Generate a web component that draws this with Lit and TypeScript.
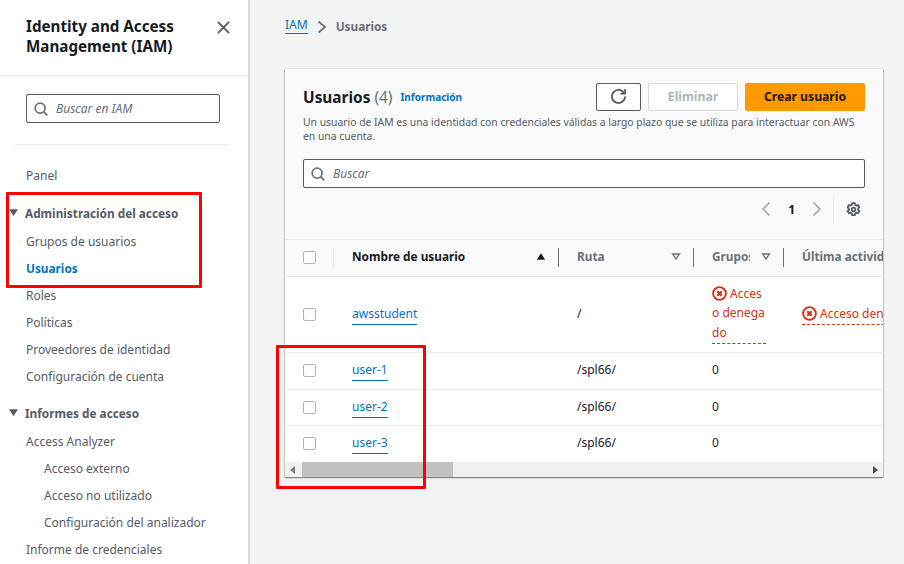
import { LitElement, css, html, svg } from 'lit'
import { customElement } from 'lit/decorators.js'

const searchIcon = html`<svg class="icon" viewBox="0 0 16 16" fill="none" stroke="currentColor" stroke-width="2">
  <circle cx="7" cy="7" r="5.6"></circle>
  <path d="M11 11l4.2 4.2"></path>
</svg>`

const errorIcon = html`<svg class="err-icon" viewBox="0 0 16 16" fill="none" stroke="#d13212" stroke-width="2">
  <circle cx="8" cy="8" r="6.8"></circle>
  <path d="M5.6 5.6l4.8 4.8M10.4 5.6l-4.8 4.8" stroke-width="2.3"></path>
</svg>`

const caret = svg`<path d="M1 1.5h10L6 9z"></path>`

const navGroups = [
  { title: 'Administración del acceso', items: [
    { label: 'Grupos de usuarios' },
    { label: 'Usuarios', active: true },
    { label: 'Roles' },
    { label: 'Políticas' },
    { label: 'Proveedores de identidad' },
    { label: 'Configuración de cuenta' },
  ] },
  { title: 'Informes de acceso', items: [
    { label: 'Access Analyzer' },
    { label: 'Acceso externo', sub: true },
    { label: 'Acceso no utilizado', sub: true },
    { label: 'Configuración del analizador', sub: true },
    { label: 'Informe de credenciales' },
  ] },
]

const users = [
  { name: 'user-1', path: '/spl66/' },
  { name: 'user-2', path: '/spl66/' },
  { name: 'user-3', path: '/spl66/' },
]

@customElement('app-root')
export class AppRoot extends LitElement {
  renderSidebar() {
    return html`
      <aside class="sidebar">
        <div class="side-head">
          <h2>Identity and Access Management (IAM)</h2>
          <svg class="close" viewBox="0 0 14 14" fill="none" stroke="#545b64" stroke-width="1.9">
            <path d="M1 1l12 12M13 1L1 13"></path>
          </svg>
        </div>
        <div class="side-search">
          <div class="input small">${searchIcon}<span>Buscar en IAM</span></div>
        </div>
        <hr class="side-rule" />
        <div class="nav-item panel">Panel</div>
        ${navGroups.map(group => html`
          <div class="nav-group">
            <div class="group-title">
              <svg class="group-caret" viewBox="0 0 12 10" fill="#545b64">${caret}</svg>
              ${group.title}
            </div>
            ${group.items.map(item => html`
              <div class="nav-item ${item.active ? 'active' : ''} ${item.sub ? 'sub' : ''}">${item.label}</div>
            `)}
          </div>
        `)}
      </aside>
    `
  }

  renderTable() {
    return html`
      <div class="table-wrap">
        <table>
          <colgroup>
            <col style="width: 49px" />
            <col style="width: 225px" />
            <col style="width: 135px" />
            <col style="width: 90px" />
            <col style="width: 200px" />
          </colgroup>
          <thead>
            <tr>
              <th class="check-cell"><span class="check"></span><i class="sep faint"></i></th>
              <th class="dark">
                <span class="th-text">Nombre de usuario</span>
                <svg class="sort" viewBox="0 0 12 10" fill="#16191f"><path d="M6 1l5 8H1z"></path></svg>
                <i class="sep"></i>
              </th>
              <th>
                <span class="th-text">Ruta</span>
                <svg class="sort" viewBox="0 0 12 10" fill="none" stroke="#687078" stroke-width="1.6"><path d="M2 2h8L6 8z"></path></svg>
                <i class="sep"></i>
              </th>
              <th>
                <span class="th-text">Grupos</span>
                <svg class="sort" viewBox="0 0 12 10" fill="none" stroke="#687078" stroke-width="1.6"><path d="M2 2h8L6 8z"></path></svg>
                <i class="sep"></i>
              </th>
              <th><span class="th-text nowrap">Última actividad</span></th>
            </tr>
          </thead>
          <tbody>
            <tr class="tall">
              <td class="check-cell"><span class="check"></span></td>
              <td><a class="link">awsstudent</a></td>
              <td>/</td>
              <td class="denied-cell"><span class="denied wrapped">${errorIcon}Acceso denegado</span></td>
              <td class="denied-cell"><span class="denied single">${errorIcon}Acceso denegado</span></td>
            </tr>
            ${users.map(user => html`
              <tr>
                <td class="check-cell"><span class="check"></span></td>
                <td><a class="link">${user.name}</a></td>
                <td>${user.path}</td>
                <td>0</td>
                <td></td>
              </tr>
            `)}
          </tbody>
        </table>
      </div>
      <div class="scrollbar">
        <svg class="arrow left" viewBox="0 0 6 8" fill="#7d7d7d"><path d="M5 0v8L0 4z"></path></svg>
        <div class="track"><div class="thumb"></div></div>
        <svg class="arrow" viewBox="0 0 6 8" fill="#4a4a4a"><path d="M1 0v8l5-4z"></path></svg>
      </div>
    `
  }

  render() {
    return html`
      <div class="page">
        ${this.renderSidebar()}
        <main class="main">
          <nav class="crumbs">
            <a class="crumb-link">IAM</a>
            <svg class="crumb-sep" viewBox="0 0 10 14" fill="none" stroke="#687078" stroke-width="1.8"><path d="M1.5 1.5 8 7l-6.5 5.5"></path></svg>
            <span class="crumb-current">Usuarios</span>
          </nav>
          <section class="card">
            <header class="card-head">
              <div class="title-row">
                <div class="title">
                  <h1>Usuarios <span class="count">(4)</span></h1>
                  <a class="info">Información</a>
                </div>
                <div class="actions">
                  <button class="btn refresh">
                    <svg viewBox="0 0 16 16" fill="none" stroke="#545b64" stroke-width="1.9">
                      <path d="M10 5h5V0"></path>
                      <path d="M15 8a7 7 0 1 1-1.1-3.8"></path>
                    </svg>
                  </button>
                  <button class="btn disabled">Eliminar</button>
                  <button class="btn primary">Crear usuario</button>
                </div>
              </div>
              <p class="desc">Un usuario de IAM es una identidad con credenciales válidas a largo plazo que se utiliza para interactuar con AWS en una cuenta.</p>
              <div class="input wide">${searchIcon}<span>Buscar</span></div>
              <div class="pager">
                <svg class="pg" viewBox="0 0 10 16" fill="none" stroke="#aab7b8" stroke-width="1.8"><path d="M8.5 1.5 2 8l6.5 6.5"></path></svg>
                <span class="pg-num">1</span>
                <svg class="pg" viewBox="0 0 10 16" fill="none" stroke="#aab7b8" stroke-width="1.8"><path d="M1.5 1.5 8 8l-6.5 6.5"></path></svg>
                <i class="pg-sep"></i>
                <svg class="gear" viewBox="0 0 16 16" fill="none" stroke="#545b64" stroke-width="1.9">
                  <path d="M6.6 1.2h2.8l.4 1.9 1.3.7 1.8-.6 1.4 2.4-1.4 1.3v1.4l1.4 1.3-1.4 2.4-1.8-.6-1.3.7-.4 1.9H6.6l-.4-1.9-1.3-.7-1.8.6-1.4-2.4 1.4-1.3V7.4L1.7 5.6l1.4-2.4 1.8.6 1.3-.7z"></path>
                  <circle cx="8" cy="8" r="2"></circle>
                </svg>
              </div>
            </header>
            ${this.renderTable()}
          </section>
        </main>
        <div class="mark mark-nav"></div>
        <div class="mark mark-users"></div>
      </div>
    `
  }

  static styles = css`
    :host {
      display: block;
      font-family: 'Noto Sans', 'Open Sans', sans-serif;
      font-size: 12px;
      color: #545b64;
    }
    * {
      box-sizing: border-box;
    }
    .page {
      display: flex;
      height: 564px;
      width: 904px;
      overflow: hidden;
      position: relative;
      background: #f2f3f3;
    }

    .sidebar {
      flex: 0 0 250px;
      height: 564px;
      background: #fff;
      border-right: 2px solid #d5dbdb;
      overflow: hidden;
    }
    .side-head {
      display: flex;
      justify-content: space-between;
      height: 76px;
      padding: 16px 18px 0 26px;
      border-bottom: 1px solid #eaeded;
    }
    .side-head h2 {
      margin: 0;
      width: 170px;
      font-size: 15.2px;
      line-height: 20px;
      font-weight: 700;
      color: #16191f;
    }
    .close {
      width: 13px;
      height: 13px;
      margin-top: 5px;
    }
    .side-search {
      padding: 18px 28px 0 26px;
    }
    .input {
      display: flex;
      align-items: center;
      gap: 8px;
      background: #fff;
      border: 1px solid #545b64;
      border-radius: 2px;
      padding-left: 7px;
      font-style: italic;
      color: #687078;
    }
    .input.small {
      height: 29px;
    }
    .input.wide {
      height: 29px;
      margin-top: 16px;
    }
    .icon {
      width: 14px;
      height: 14px;
      color: #687078;
    }
    .side-rule {
      margin: 21px 18px 17px 15px;
      border: 0;
      border-top: 1px solid #eaeded;
    }
    .nav-item {
      height: 27px;
      line-height: 27px;
      padding-left: 26px;
      white-space: nowrap;
    }
    .nav-item.panel {
      margin-bottom: 10px;
    }
    .nav-item.sub {
      padding-left: 44px;
    }
    .nav-item.active {
      color: #0073bb;
      font-size: 11.8px;
      font-weight: 700;
    }
    .nav-group {
      margin-bottom: 9px;
    }
    .group-title {
      display: flex;
      align-items: center;
      gap: 6px;
      height: 27px;
      margin-bottom: 2px;
      padding-left: 8px;
      font-size: 11.8px;
      font-weight: 700;
      white-space: nowrap;
    }
    .group-caret {
      width: 11px;
      height: 9px;
    }

    .main {
      flex: 1;
      min-width: 0;
      padding: 0 20px 0 35px;
    }
    .crumbs {
      display: flex;
      align-items: center;
      height: 69px;
      padding-bottom: 18px;
    }
    .crumb-link {
      color: #0073bb;
      border-bottom: 1px solid #0073bb;
      line-height: 16px;
    }
    .crumb-sep {
      width: 10px;
      height: 14px;
      margin: 2px 9px 0 9px;
    }
    .crumb-current {
      font-size: 11.8px;
      font-weight: 700;
      color: #687078;
    }

    .card {
      background: #fff;
      box-shadow: 0 1px 1px 0 rgba(0, 28, 36, 0.3), 1px 1px 1px 0 rgba(0, 28, 36, 0.15), -1px 1px 1px 0 rgba(0, 28, 36, 0.15), 0 -1px 0 0 rgba(0, 28, 36, 0.05);
      height: 408px;
      width: 598px;
      overflow: hidden;
    }
    .card-head {
      background: #fafafa;
      height: 171px;
      padding: 14px 18px 0 18px;
      border-bottom: 1px solid #eaeded;
    }
    .title-row {
      display: flex;
      justify-content: space-between;
      height: 28px;
    }
    .title {
      display: flex;
      align-items: center;
      gap: 8px;
    }
    h1 {
      margin: 0;
      font-size: 15.4px;
      font-weight: 700;
      color: #16191f;
    }
    .count {
      font-weight: 400;
      color: #687078;
    }
    .info {
      font-size: 10px;
      font-weight: 700;
      color: #0073bb;
    }
    .actions {
      display: flex;
      gap: 7px;
    }
    .btn {
      height: 28px;
      border-radius: 2px;
      font: 700 12.2px 'Noto Sans', 'Open Sans', sans-serif;
      padding: 0 0 1px;
      background: #fff;
    }
    .refresh {
      width: 45px;
      border: 1px solid #545b64;
      display: flex;
      align-items: center;
      justify-content: center;
    }
    .refresh svg {
      width: 15px;
      height: 15px;
    }
    .disabled {
      width: 90px;
      border: 1px solid #d5dbdb;
      color: #aab7b8;
    }
    .primary {
      width: 120px;
      border: 1px solid #ff9900;
      background: #ff9900;
      color: #16191f;
    }
    .desc {
      margin: 4px 0 0;
      font-size: 10.37px;
      line-height: 14px;
      color: #545b64;
    }
    .pager {
      display: flex;
      align-items: center;
      justify-content: flex-end;
      height: 28px;
      margin-top: 7px;
    }
    .pg {
      width: 10px;
      height: 16px;
    }
    .pg-num {
      margin: 0 17px 0 17px;
      font-weight: 700;
      color: #16191f;
    }
    .pg-sep {
      width: 1px;
      height: 28px;
      background: #eaeded;
      margin: 0 12px 0 11px;
    }
    .gear {
      width: 15px;
      height: 15px;
      margin-right: 4px;
    }

    .table-wrap {
      height: 222px;
      overflow: hidden;
    }
    table {
      width: 699px;
      table-layout: fixed;
      border-collapse: collapse;
    }
    th {
      position: relative;
      height: 36px;
      padding: 0 0 3px 18px;
      background: #fafafa;
      border-bottom: 1px solid #eaeded;
      text-align: left;
      font-size: 11.8px;
      font-weight: 700;
      color: #687078;
    }
    th.dark {
      color: #16191f;
    }
    .th-text {
      display: block;
      width: 38px;
      white-space: nowrap;
      overflow: hidden;
    }
    th.dark .th-text {
      width: 150px;
    }
    .th-text.nowrap {
      width: 180px;
    }
    .sort {
      position: absolute;
      right: 13px;
      top: 12px;
      width: 10px;
      height: 9px;
    }
    .sep {
      position: absolute;
      right: 0;
      top: 8px;
      width: 1px;
      height: 19px;
      background: #687078;
    }
    .sep.faint {
      background: #eaeded;
    }
    td {
      height: 37px;
      padding: 0 0 2px 18px;
      border-bottom: 1px solid #eaeded;
      color: #16191f;
      vertical-align: middle;
    }
    tbody tr:nth-child(3) td {
      height: 36px;
    }
    th.check-cell,
    td.check-cell,
    td.denied-cell {
      padding-bottom: 0;
    }
    tbody tr:last-child td {
      border-bottom: 0;
    }
    tr.tall td {
      height: 76px;
    }
    .check {
      display: block;
      width: 13px;
      height: 13px;
      background: #fff;
      border: 1px solid #aab7b8;
      border-radius: 2px;
    }
    .link {
      color: #0073bb;
      border-bottom: 1px solid #0073bb;
      padding-bottom: 2px;
    }
    .denied {
      color: #d13212;
      border-bottom: 1px dashed #d13212;
      padding-bottom: 2px;
    }
    .err-icon {
      width: 15px;
      height: 15px;
      margin-right: 3px;
      vertical-align: -3px;
    }
    .wrapped {
      display: block;
      width: 54px;
      line-height: 19.5px;
      padding-bottom: 1px;
      word-break: break-all;
    }
    .single {
      display: block;
      margin-top: 2px;
      white-space: nowrap;
    }

    .scrollbar {
      display: flex;
      align-items: center;
      height: 15px;
      background: #f1f1f1;
    }
    .arrow {
      flex: 0 0 auto;
      width: 6px;
      height: 8px;
      margin: 0 5px;
    }
    .arrow.left {
      margin-right: 6px;
    }
    .track {
      flex: 1;
      height: 15px;
    }
    .thumb {
      width: 151px;
      height: 15px;
      background: #c1c1c1;
    }

    .mark {
      position: absolute;
      border: 3px solid #ff0000;
      border-radius: 1px;
    }
    .mark-nav {
      left: 6px;
      top: 192px;
      width: 196px;
      height: 96px;
    }
    .mark-users {
      left: 276px;
      top: 345px;
      width: 150px;
      height: 144px;
    }
  `
}

declare global {
  interface HTMLElementTagNameMap {
    'app-root': AppRoot
  }
}
